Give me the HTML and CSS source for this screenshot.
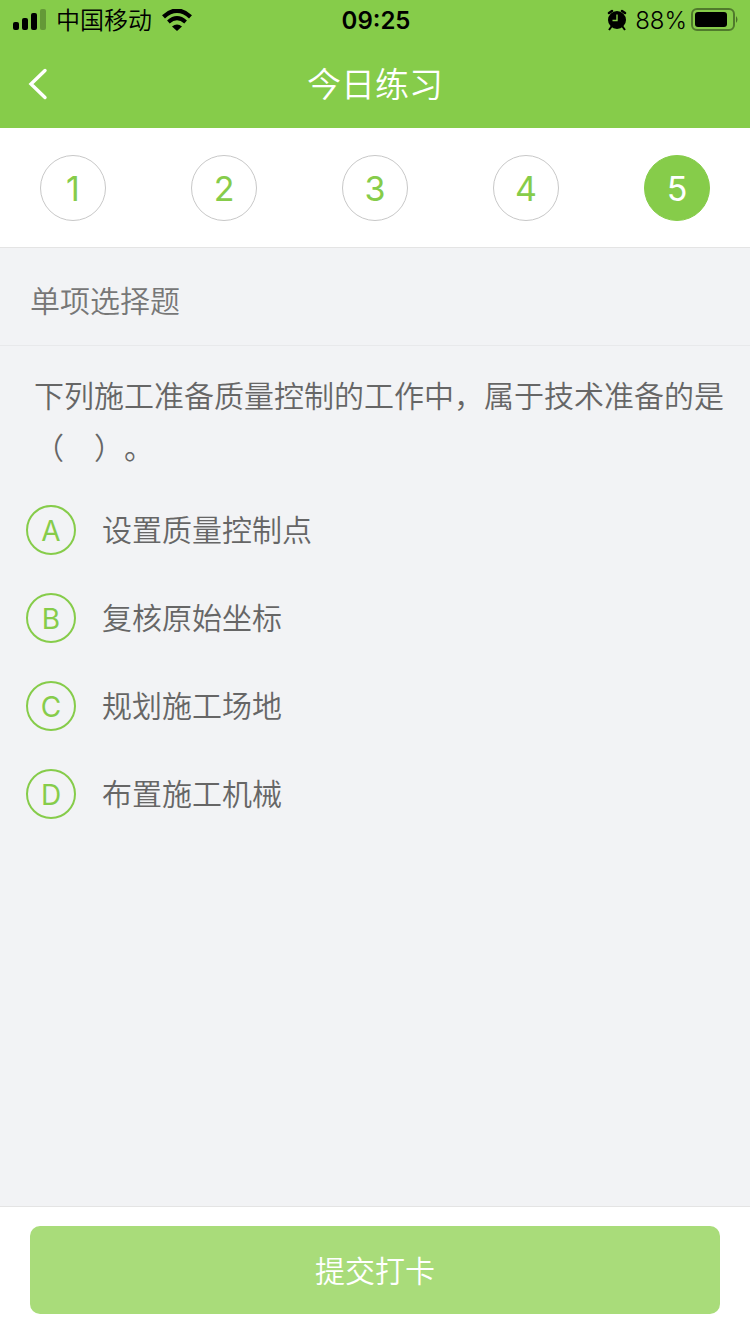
FILE: index.html
```html
<!DOCTYPE html>
<html lang="zh-CN">
<head>
  <meta charset="UTF-8" />
  <title>今日练习</title>
  <meta name="viewport" content="width=device-width, initial-scale=1.0" />
  <link rel="stylesheet" href="styles.css">
</head>
<body>
  <header class="header">
    <div class="status-bar">
      <div class="status-left">
        <svg class="signal" width="33" height="22" viewBox="0 0 33 22">
          <rect x="0" y="13" width="6" height="8" rx="2" />
          <rect x="9" y="9" width="6" height="12" rx="2" />
          <rect x="18" y="4" width="6" height="17" rx="2" />
          <rect x="27" y="0" width="6" height="21" rx="2" opacity="0.25" />
        </svg>
        <span class="carrier">中国移动</span>
        <svg class="wifi" width="30" height="22" viewBox="0 0 30 22">
          <path d="M1.5 7.8 Q15 -4.4 28.5 7.8" fill="none" stroke="#000" stroke-width="4.4" />
          <path d="M6.4 13 Q15 5.4 23.6 13" fill="none" stroke="#000" stroke-width="4" />
          <path d="M10 17.4 Q15 13.4 20 17.4 L15 22 Z" />
        </svg>
      </div>
      <div class="time">09:25</div>
      <div class="status-right">
        <svg class="alarm" width="20" height="22" viewBox="0 0 20 22">
          <circle cx="10" cy="11" r="9" />
          <path d="M2 4 L5 2 M18 4 L15 2" stroke="#000" stroke-width="2.6" stroke-linecap="round" />
          <path d="M4.5 17.5 L2 21 M15.5 17.5 L18 21" stroke="#000" stroke-width="2" />
          <path d="M10 5.5 V11.5 H5.5" fill="none" stroke="#86cc4a" stroke-width="1.4" />
        </svg>
        <span class="percent">88%</span>
        <svg class="battery" width="48" height="24" viewBox="0 0 48 24">
          <rect x="1" y="1" width="42" height="21" rx="5" fill="none" stroke="#000" stroke-width="2" opacity="0.4" />
          <rect x="4" y="4" width="32" height="15" rx="3" />
          <path d="M45 8 Q48 11.5 45 15 Z" opacity="0.45" />
        </svg>
      </div>
    </div>
    <div class="nav">
      <button class="back" aria-label="返回">
        <svg width="20" height="32" viewBox="0 0 20 32">
          <path d="M17 2.5 L3 16 L17 29.5" fill="none" stroke="#fff" stroke-width="3.4" stroke-linecap="round" />
        </svg>
      </button>
      <h1 class="title">今日练习</h1>
    </div>
  </header>

  <nav class="steps">
    <button class="step">1</button>
    <button class="step">2</button>
    <button class="step">3</button>
    <button class="step">4</button>
    <button class="step active">5</button>
  </nav>

  <main class="content">
    <h2 class="type">单项选择题</h2>
    <form id="quiz" class="quiz">
      <p class="question">下列施工准备质量控制的工作中，属于技术准备的是（　）。</p>
      <div class="options">
        <label class="option"><input type="radio" name="answer" value="A"><span class="letter">A</span>设置质量控制点</label>
        <label class="option"><input type="radio" name="answer" value="B"><span class="letter">B</span>复核原始坐标</label>
        <label class="option"><input type="radio" name="answer" value="C"><span class="letter">C</span>规划施工场地</label>
        <label class="option"><input type="radio" name="answer" value="D"><span class="letter">D</span>布置施工机械</label>
      </div>
    </form>
  </main>

  <footer class="footer">
    <button class="submit" type="submit" form="quiz">提交打卡</button>
  </footer>
</body>
</html>
```

FILE: styles.css
```css
* {
  box-sizing: border-box;
}

body {
  display: flex;
  flex-direction: column;
  min-height: 100vh;
  margin: 0;
  font-family: Inter, "Noto Sans CJK SC", sans-serif;
  font-size: 30px;
  font-weight: 350;
  color: #666;
  background: #f2f3f5;
}

button {
  padding: 0;
  border: none;
  font: inherit;
  cursor: pointer;
}

svg {
  display: block;
}

/* header */
.header {
  background: #86cc4a;
}

.status-bar {
  display: grid;
  grid-template-columns: 1fr auto 1fr;
  align-items: center;
  height: 40px;
  padding: 0 11px 0 13px;
  font-size: 24px;
  line-height: 38px;
  color: #000;
}

.status-left,
.status-right {
  display: flex;
  align-items: center;
}

.status-left {
  gap: 10px;
}

.status-right {
  justify-content: flex-end;
  gap: 4px;
}

.carrier,
.time,
.percent {
  padding-top: 2px;
}

.time {
  font-weight: 600;
}

.percent {
  margin-left: 4px;
}

.nav {
  display: grid;
  grid-template-columns: 60px 1fr 60px;
  align-items: center;
  height: 88px;
}

.back {
  display: flex;
  padding-left: 28px;
  background: none;
}

.title {
  margin: 0;
  padding-bottom: 4px;
  font-size: 34px;
  font-weight: 350;
  text-align: center;
  color: #fff;
}

/* question numbers */
.steps {
  display: flex;
  justify-content: space-between;
  padding: 27px 40px 26px;
  background: #fff;
  border-bottom: 1px solid #e4e4e4;
}

.step {
  width: 66px;
  height: 66px;
  border: 1px solid #c8c8c8;
  border-radius: 50%;
  font-size: 34px;
  font-weight: 400;
  color: #86cc4a;
  background: #fff;
}

.step.active {
  border-color: #86cc4a;
  color: #fff;
  background: #86cc4a;
}

/* question */
.content {
  flex: 1;
}

.type {
  margin: 0;
  padding: 28px 30px 19px;
  border-bottom: 1px solid #e8e9eb;
  font-size: 30px;
  font-weight: 350;
  line-height: 50px;
  color: #777;
}

.quiz {
  padding: 24px 20px 24px 26px;
}

.question {
  margin: 0;
  padding-left: 8px;
  line-height: 52px;
  text-spacing-trim: space-all;
}

.options {
  display: flex;
  flex-direction: column;
  gap: 38px;
  margin-top: 31px;
}

.option {
  display: flex;
  align-items: center;
  gap: 26px;
  line-height: 50px;
  cursor: pointer;
}

.option input {
  position: absolute;
  opacity: 0;
}

.letter {
  width: 50px;
  height: 50px;
  border: 2px solid #86cc4a;
  border-radius: 50%;
  font-size: 28px;
  font-weight: 400;
  line-height: 48px;
  text-align: center;
  color: #86cc4a;
}

.option input:checked + .letter {
  color: #fff;
  background: #86cc4a;
}

/* submit */
.footer {
  padding: 19px 30px 20px;
  border-top: 1px solid #e4e4e4;
  background: #fff;
}

.submit {
  width: 100%;
  height: 88px;
  padding-bottom: 2px;
  border-radius: 10px;
  color: #fff;
  background: #a9dc7a;
}
```
